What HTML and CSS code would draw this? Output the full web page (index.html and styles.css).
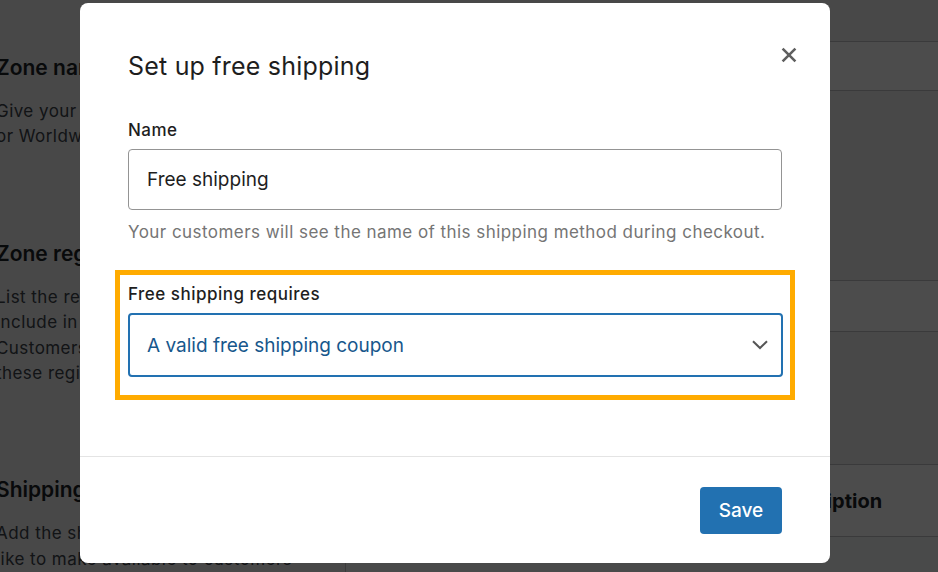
FILE: index.html
```html
<!DOCTYPE html>
<html lang="en">
<head>
<meta charset="utf-8">
<title>Set up free shipping</title>
<link rel="stylesheet" href="styles.css">
</head>
<body>
<div class="page">
  <div class="side">
    <h2 class="side-title first">Zone name</h2>
    <p class="side-text">Give your zone a name! E.g. Local, or Worldwide.</p>
    <h2 class="side-title">Zone regions</h2>
    <p class="side-text">List the regions you'd like to include in your shipping zone. Customers will be matched against these regions.</p>
    <h2 class="side-title">Shipping methods</h2>
    <p class="side-text">Add the shipping methods you'd like to make available to customers in this zone.</p>
  </div>
  <div class="main">
    <div class="field-box zone-name"></div>
    <div class="field-box zone-regions"></div>
    <div class="methods-table">
      <div class="table-head">
        <span class="th th-title">Title</span>
        <span class="th th-enabled">Enabled</span>
        <span class="th th-desc">Description</span>
      </div>
      <div class="table-row"></div>
    </div>
  </div>
</div>

<div class="overlay"></div>

<div class="modal" role="dialog" aria-label="Set up free shipping">
  <div class="modal-header">
    <h1 class="modal-title">Set up free shipping</h1>
    <button class="modal-close" aria-label="Close">
      <svg width="16" height="16" viewBox="0 0 16 16"><path d="M1.6 1.6 L14.4 14.4 M14.4 1.6 L1.6 14.4" stroke="#5f5f5f" stroke-width="2.6" fill="none" stroke-linecap="butt"/></svg>
    </button>
  </div>
  <div class="modal-body">
    <label class="field-label name-label">Name</label>
    <div class="text-input">Free shipping</div>
    <p class="help">Your customers will see the name of this shipping method during checkout.</p>
    <div class="highlight">
      <label class="field-label">Free shipping requires</label>
      <div class="select">
        <span class="select-value">A valid free shipping coupon</span>
        <svg class="chevron" width="16" height="10" viewBox="0 0 16 10"><path d="M1 1.2 L8 8 L15 1.2" stroke="#555" stroke-width="2" fill="none"/></svg>
      </div>
    </div>
  </div>
  <div class="modal-footer">
    <button class="btn-primary">Save</button>
  </div>
</div>
</body>
</html>
```

FILE: styles.css
```css
* { box-sizing: border-box; }

html, body {
  margin: 0;
  padding: 0;
  height: 100%;
  overflow: hidden;
}

body {
  background: #f0f0f1;
  font-family: Inter, "Noto Sans", "Liberation Sans", sans-serif;
  color: #1e1e1e;
}

/* Background page */
.page {
  display: flex;
  align-items: flex-start;
  width: 1100px;
}

.side {
  width: 305px;
  margin-left: -4px;
  flex: none;
}

.side-title {
  margin: 90px 0 0;
  font-size: 21px;
  line-height: 28px;
  font-weight: 600;
  color: #1d2327;
  white-space: nowrap;
}

.side-title.first { margin-top: 54px; }

.side-text {
  margin: 17px 0 0;
  font-size: 17px;
  letter-spacing: 0.45px;
  line-height: 25.4px;
  color: #3c434a;
}

.main {
  margin-left: 44px;
  width: 700px;
  flex: none;
}

.field-box {
  background: #fff;
  border: 1px solid #c3c4c7;
}

.zone-name { margin-top: 41px; height: 50px; }
.zone-regions { margin-top: 189px; height: 52px; }

.methods-table {
  margin-top: 132px;
  border: 1px solid #c3c4c7;
  background: #fff;
}

.table-head {
  display: grid;
  grid-template-columns: 200px 223px 1fr;
  height: 72px;
  align-items: center;
  border-bottom: 1px solid #c3c4c7;
  background: #fff;
}

.th {
  font-size: 20px;
  font-weight: 700;
  color: #1d2327;
  padding-left: 16px;
}

.th-desc { padding-left: 0; }

.table-row { height: 60px; background: #f6f7f7; }

/* Overlay */
.overlay {
  position: fixed;
  inset: 0;
  background: rgba(0, 0, 0, 0.7);
}

/* Modal */
.modal {
  position: fixed;
  left: 80px;
  top: 3px;
  width: 750px;
  height: 560px;
  background: #fff;
  border-radius: 8px;
  display: flex;
  flex-direction: column;
}

.modal-header {
  padding: 47px 48px 0;
}

.modal-title {
  margin: 0;
  font-size: 25px;
  letter-spacing: 0.2px;
  line-height: 32px;
  font-weight: 400;
  color: #1e1e1e;
}

.modal-close {
  position: absolute;
  top: 44px;
  right: 33px;
  width: 16px;
  height: 16px;
  padding: 0;
  border: 0;
  background: none;
  display: block;
}

.modal-close svg { display: block; }

.modal-body {
  padding: 0 48px;
}

.field-label {
  display: block;
  font-size: 17px;
  letter-spacing: 0.5px;
  line-height: 20px;
  font-weight: 500;
  color: #1e1e1e;
}

.name-label { margin-top: 38px; }

.text-input {
  margin-top: 9px;
  height: 61px;
  border: 1px solid #949494;
  border-radius: 4px;
  padding-left: 18px;
  display: flex;
  align-items: center;
  font-size: 19px;
  color: #1e1e1e;
}

.help {
  margin: 12px 0 0;
  font-size: 17px;
  letter-spacing: 0.45px;
  line-height: 20px;
  color: #757575;
}

.highlight {
  margin: 28px -13px 0;
  border: 5px solid #ffab00;
  padding: 9px 7px 18px 8px;
}

.select {
  margin-top: 9px;
  height: 64px;
  border: 2px solid #2271b1;
  border-radius: 4px;
  padding: 0 13px 0 17px;
  display: flex;
  align-items: center;
  justify-content: space-between;
}

.select-value {
  font-size: 19px;
  color: #17578c;
}

.chevron { display: block; }

.modal-footer {
  margin-top: auto;
  border-top: 1px solid #e4e4e4;
  padding: 30px 48px 29px;
  display: flex;
  justify-content: flex-end;
}

.btn-primary {
  width: 82px;
  height: 47px;
  border: 0;
  border-radius: 4px;
  background: #2271b1;
  color: #fff;
  font-family: Inter, "Noto Sans", "Liberation Sans", sans-serif;
  font-size: 19px;
  font-weight: 500;
  padding: 0;
}
```
